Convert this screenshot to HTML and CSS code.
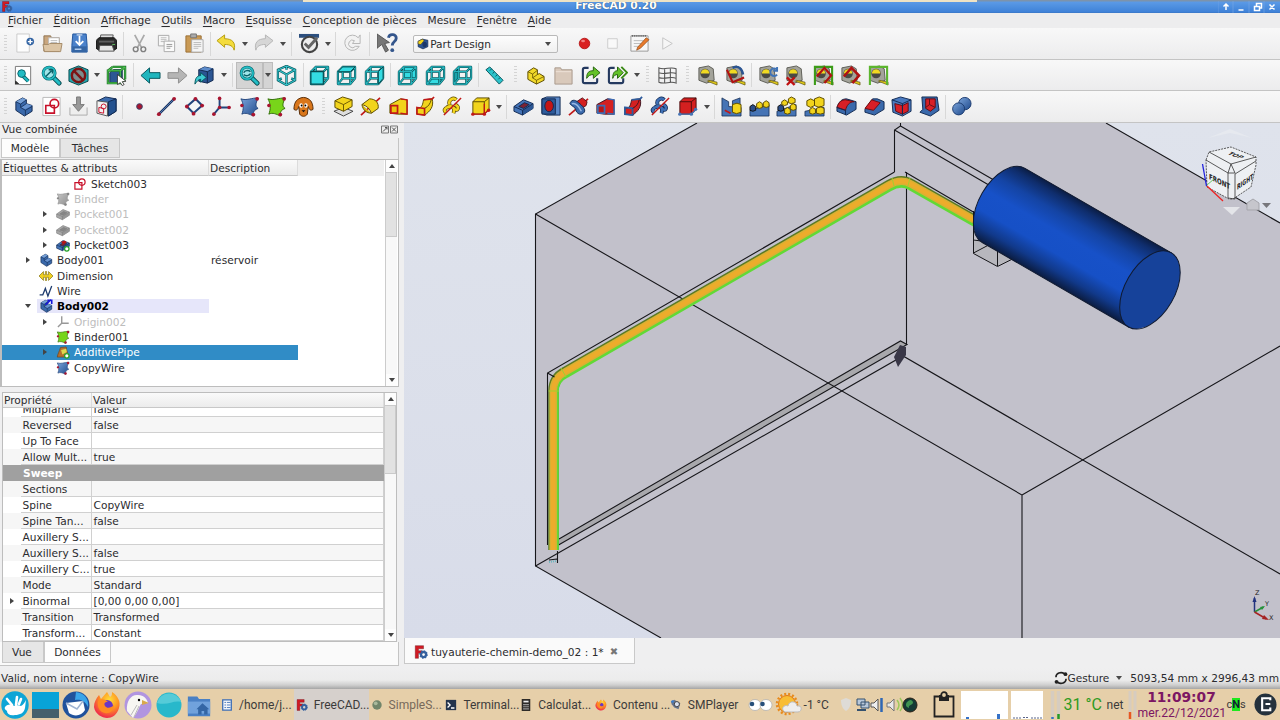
FILE: index.html
```
<!DOCTYPE html>
<html lang="fr">
<head>
  <meta charset="UTF-8">
  <title>FreeCAD 0.20</title>
  <link rel="stylesheet" href="styles.css">
</head>
<body>

  <!-- icon library -->
  <svg class="defs" aria-hidden="true">
    <defs>
      <linearGradient id="blueGrad" x1="0" y1="0" x2="1" y2="1"><stop offset="0" stop-color="#7aa3da"/><stop offset="1" stop-color="#1f4a8c"/></linearGradient>
      <radialGradient id="fire" cx=".6" cy=".3" r=".8"><stop offset="0" stop-color="#ffde3a"/><stop offset=".45" stop-color="#ff9420"/><stop offset=".85" stop-color="#f0304a"/></radialGradient>
    </defs>

    <!-- file -->
    <symbol id="new" viewBox="0 0 22 22"><path d="M3 1h13v19H3z" fill="#fdfdfd" stroke="#c9c9c9"/><circle cx="17" cy="9" r="4" fill="#3465a4"/><path d="M17 6.500v5M14.500 9h5" stroke="#fff" stroke-width="1.500"/></symbol>
    <symbol id="open" viewBox="0 0 22 22"><path d="M2 3h7l1 2h8v14H2z" fill="#c9a67e" stroke="#8f7352"/><path d="M7 5h11v9H7z" fill="#fff" stroke="#bbb"/><path d="M9 8h7M9 10h7" stroke="#bbb"/><path d="M1 12h6l1-1h13l-1.500 8.500h-17z" fill="#dcc5a5" stroke="#a58a68"/></symbol>
    <symbol id="save" viewBox="0 0 22 22"><path d="M4 1h14l1 12v7H3v-7z" fill="#4b82cb" stroke="#20549c"/><path d="M3.500 14h15v6h-15z" fill="#3465a4"/><path d="M11 3v9M7 8.500l4 4 4-4" fill="none" stroke="#fff" stroke-width="1.800"/><path d="M6 17h7" stroke="#bcd3f2" stroke-width="1.500"/><path d="M8 2h6" stroke="#fff"/></symbol>
    <symbol id="print" viewBox="0 0 22 22"><path d="M5 2h13l-1 7H4z" fill="#ddd" stroke="#555"/><path d="M0 8l3-3h16l3 3v8l-3 2H3l-3-2z" fill="#2b2b2b" stroke="#111"/><path d="M3 8h16v2H3z" fill="#5d5d5d"/><path d="M17 12h3" stroke="#5fc05f"/><path d="M4 13h13l2 6H3z" fill="#e6e6e6" stroke="#555"/></symbol>
    <symbol id="cut" viewBox="0 0 22 22"><path d="M6 2l7 13M16 2L9 15" stroke="#a9a9a9" stroke-width="1.800"/><circle cx="7" cy="17" r="2.500" fill="none" stroke="#808080" stroke-width="1.500"/><circle cx="15" cy="17" r="2.500" fill="none" stroke="#808080" stroke-width="1.500"/></symbol>
    <symbol id="copy" viewBox="0 0 22 22"><path d="M2.500 2.500h11v11h-11z" fill="#f7f7f7" stroke="#aaa"/><path d="M5 5h6M5 7h6M5 9h4" stroke="#bbb"/><path d="M8.500 8.500h11v11h-11z" fill="#fafafa" stroke="#aaa"/><path d="M11 12h6M11 14h6M11 16h4" stroke="#999"/></symbol>
    <symbol id="paste" viewBox="0 0 22 22"><path d="M2 3h16v17H2z" fill="#c99a55" stroke="#9a6f34"/><path d="M7 1h6v4H7z" fill="#aaa" stroke="#777"/><path d="M8 7h12v13H8z" fill="#f5f5f5" stroke="#aaa"/><path d="M10 10h8M10 12h8M10 14h8M10 16h5" stroke="#bbb"/></symbol>
    <symbol id="undo" viewBox="0 0 22 22"><path d="M1 8l8-6v4c8 0 12 4 10 12-1-4-4-6-10-6v3z" fill="#f4dc3c" stroke="#b69c10"/></symbol>
    <symbol id="redo" viewBox="0 0 22 22"><path d="M21 8l-8-6v4C5 6 1 10 3 18c1-4 4-6 10-6v3z" fill="#d6d6d6" stroke="#b5b5b5"/></symbol>
    <symbol id="check" viewBox="0 0 22 22"><path d="M0 1h21v4H0z" fill="#2c4f7e"/><circle cx="11" cy="12" r="8" fill="#eee" stroke="#444" stroke-width="2.200"/><path d="M6 11l4 4 9-10" fill="none" stroke="#666" stroke-width="3"/></symbol>
    <symbol id="refresh" viewBox="0 0 22 22"><path d="M17 5A8 8 0 1 0 18 14h-4a4 4 0 1 1-1-6l-2 3h8V2z" fill="#f2f2f2" stroke="#b5b5b5"/></symbol>
    <symbol id="whats" viewBox="0 0 22 22"><path d="M0 1l13 9-5 1 4 7-3 2-4-8-5 4z" fill="#777" stroke="#555"/><path d="M12 5c1-5 9-4 8 1 0 3-4 3-4 7" fill="none" stroke="#34568c" stroke-width="3"/><circle cx="16" cy="18" r="2" fill="#34568c"/></symbol>
    <symbol id="record" viewBox="0 0 22 22"><circle cx="11" cy="11" r="5.500" fill="#d92020" stroke="#b81c1c"/><ellipse cx="9.500" cy="8.500" rx="2" ry="1.300" fill="#f08080"/></symbol>
    <symbol id="stop" viewBox="0 0 22 22"><path d="M6 6h10v10H6z" fill="#f9f9f9" stroke="#ccc"/></symbol>
    <symbol id="macro" viewBox="0 0 22 22"><path d="M2 3h18v16H2z" fill="#f7f7f7" stroke="#999"/><path d="M3 3h16" stroke="#555" stroke-dasharray="1 1" stroke-width="2"/><path d="M5 8h10M5 11h8M5 14h6" stroke="#bbb"/><path d="M9 15l9-10 3 2-9 9-4 2z" fill="#e87a2c" stroke="#8d4a18" stroke-width=".7"/></symbol>
    <symbol id="play" viewBox="0 0 22 22"><path d="M6 5l10 6-10 6z" fill="#f6f6f6" stroke="#c4c4c4"/></symbol>

    <!-- view -->
    <symbol id="lens" viewBox="0 0 22 22"><path d="M13 13l6 6" stroke="#06454b" stroke-width="5" stroke-linecap="round"/><path d="M13 13l6 6" stroke="#22bcc4" stroke-width="3" stroke-linecap="round"/><circle cx="8.500" cy="8.500" r="6.300" fill="#9fe6ea" stroke="#06646b" stroke-width="3"/><circle cx="8.500" cy="8.500" r="6.300" fill="none" stroke="#22bcc4" stroke-width="1.800"/></symbol>
    <symbol id="fitall" viewBox="0 0 22 22"><path d="M2.500 1.500h16v19H7l-4.500-4z" fill="#fff" stroke="#777"/><path d="M2 16l5 4.500H2z" fill="#333"/><path d="M10 11l6 6" stroke="#06646b" stroke-width="4"/><path d="M10 11l6 6" stroke="#22bcc4" stroke-width="2"/><circle cx="9" cy="9" r="4" fill="#22bcc4" stroke="#06646b"/></symbol>
    <symbol id="fitsel" viewBox="0 0 22 22"><use href="#lens"/><path d="M5 12l6-6M8 5h4v4" fill="none" stroke="#0a6168" stroke-width="1.500"/></symbol>
    <symbol id="draw" viewBox="0 0 22 22"><path d="M1 5l10-4 10 4v12l-10 4-10-4z" fill="#22aab2" stroke="#06454b"/><circle cx="11" cy="11" r="7" fill="#7d8d8d" stroke="#7c1414" stroke-width="2.600"/><path d="M6 6l10 10" stroke="#7c1414" stroke-width="2.600"/></symbol>
    <symbol id="bbox" viewBox="0 0 22 22"><path d="M4 8l4-3h9v10l-3 4H4z" fill="#2d5794" stroke="#132a50"/><path d="M2 6h13v13H2zM7 2h13v13M7 2L2 6M15 6l5-4M15 19l5-4" fill="none" stroke="#176a24" stroke-width="2.400"/><path d="M2 6h13v13H2zM7 2h13v13M7 2L2 6M15 6l5-4M15 19l5-4" fill="none" stroke="#4fc24f" stroke-width="1.100"/><path d="M12 10l9 7-4 .5 2 3-2 1-2-3-3 2z" fill="#fff" stroke="#222" stroke-width=".8"/></symbol>
    <symbol id="back" viewBox="0 0 22 22"><path d="M1 11l9-8v5h11v6H10v5z" fill="#1fb5bd" stroke="#06555c"/></symbol>
    <symbol id="fwd" viewBox="0 0 22 22"><path d="M21 11l-9-8v5H1v6h11v5z" fill="#b5b5b5" stroke="#8e8e8e"/></symbol>
    <symbol id="linknav" viewBox="0 0 22 22"><path d="M5 5l6-3 9 2v12l-6 3-9-2z" fill="#2b5593" stroke="#132a50"/><path d="M5 5l6-3 9 2-6 3z" fill="#5c8bca"/><path d="M5 5l9 2v12M14 7l6-3" fill="none" stroke="#132a50"/><path d="M1 20c0-7 3-9 6-9V8l6 5-6 5v-3c-2 0-4 2-6 5z" fill="#3ccbd2" stroke="#06555c"/></symbol>
    <symbol id="zoomv" viewBox="0 0 22 22"><use href="#lens"/><path d="M5 8a4 3 0 0 1 7-1M12 9a4 3 0 0 1-7 1" stroke="#0a6168" stroke-width="1.500" fill="none"/></symbol>
    <symbol id="iso" viewBox="0 0 22 22"><path d="M11 1l9 4v11l-9 5-9-5V5zM2 5l9 5 9-5M11 10v11M11 1v4M2 16l4-2M20 16l-4-2" fill="none" stroke="#06545b" stroke-width="2.400"/><path d="M11 1l9 4v11l-9 5-9-5V5zM2 5l9 5 9-5M11 10v11M11 1v4M2 16l4-2M20 16l-4-2" fill="none" stroke="#35c3ca" stroke-width="1.100"/></symbol>
    <symbol id="wire" viewBox="0 0 22 22"><path d="M2 7h13v13H2zM7 2h13v12H7zM2 7l5-5M15 7l5-5M15 20l5-6M2 20l5-6" fill="none" stroke="#05474d" stroke-width="2.300" stroke-linejoin="round"/><path d="M2 7h13v13H2zM7 2h13v12H7zM2 7l5-5M15 7l5-5M15 20l5-6M2 20l5-6" fill="none" stroke="#27b6be" stroke-width="1.200"/></symbol>
    <symbol id="vfront" viewBox="0 0 22 22"><use href="#wire"/><path d="M2 7h13v13H2z" fill="#34dbe2" stroke="#05474d" stroke-width="1.200"/></symbol>
    <symbol id="vtop" viewBox="0 0 22 22"><use href="#wire"/><path d="M2 7l5-5h13l-5 5z" fill="#34dbe2" stroke="#05474d"/></symbol>
    <symbol id="vright" viewBox="0 0 22 22"><use href="#wire"/><path d="M15 7l5-5v12l-5 6z" fill="#34dbe2" stroke="#05474d"/></symbol>
    <symbol id="vrear" viewBox="0 0 22 22"><path d="M7 2h13v12H7z" fill="#34dbe2"/><use href="#wire"/></symbol>
    <symbol id="vbottom" viewBox="0 0 22 22"><path d="M2 20l5-6h13l-5 6z" fill="#34dbe2"/><use href="#wire"/></symbol>
    <symbol id="vleft" viewBox="0 0 22 22"><path d="M2 7l5-5v12l-5 6z" fill="#1aa4ab"/><use href="#wire"/></symbol>
    <symbol id="ruler" viewBox="0 0 22 22"><path d="M2 5l4-3 14 14-4 4z" fill="#2bc3cb" stroke="#06555c"/><path d="M8 4l-2 2M11 7l-2 2M14 10l-2 2M17 13l-2 2" stroke="#06555c"/></symbol>
    <symbol id="part" viewBox="0 0 22 22"><path d="M3 7l6-4 4 2v5l2-1 5 3v4l-8 4-9-5z" fill="#f2d92a" stroke="#5b4b00"/><path d="M3 7l5 2.500 5-4M8 9.500v4L12 16l8-4M12 16v4M8 13.500l5-3.500" fill="none" stroke="#5b4b00" stroke-width=".8"/></symbol>
    <symbol id="folder" viewBox="0 0 22 22"><path d="M2 3h6l1 2h11v15H2z" fill="#d9c9bb" stroke="#a8998c"/><path d="M3 7h16" stroke="#efe3d8"/></symbol>
    <symbol id="link" viewBox="0 0 22 22"><path d="M9 3H5a2 2 0 0 0-2 2v12a2 2 0 0 0 2 2h11a2 2 0 0 0 2-2v-3" fill="none" stroke="#24395f" stroke-width="2.200"/><path d="M7 14c0-6 2-8 7-8V2l7 6-7 6v-4c-3 0-5 1-7 4z" fill="#63c228" stroke="#23610a"/></symbol>
    <symbol id="links" viewBox="0 0 22 22"><path d="M8 3H4a2 2 0 0 0-2 2v12a2 2 0 0 0 2 2h11a2 2 0 0 0 2-2v-3" fill="none" stroke="#24395f" stroke-width="2.200"/><path d="M15 2l6 6-6 6" fill="none" stroke="#3a8a14" stroke-width="2"/><path d="M6 14c0-6 2-8 5-8V2l6 6-6 6v-4c-2 0-4 1-5 4z" fill="#63c228" stroke="#23610a"/></symbol>
    <symbol id="grid" viewBox="0 0 22 22"><path d="M2 3c6 3 12-2 18 1v15c-6-3-12 2-18-1zM8 3.500v15M14 3v15M2 8c6 3 12-2 18 1M2 13c6 3 12-2 18 1" fill="none" stroke="#555" stroke-width="1.100"/></symbol>
    <symbol id="tape" viewBox="0 0 22 22"><path d="M2 3l10-2 5 3 1 12-8 3-8-3z" fill="#a3a39a" stroke="#5d5d56"/><circle cx="8.500" cy="9" r="5" fill="#4a4a44"/><path d="M4 9a4.500 4.500 0 0 1 9 0z" fill="#f1da22"/><path d="M12 16l9 2v3l-10-4z" fill="#e3cc18" stroke="#55490a" stroke-width=".7"/></symbol>
    <symbol id="tang" viewBox="0 0 22 22"><use href="#tape"/><path d="M8 3c6-3 10 1 11 7" fill="none" stroke="#2b5593" stroke-width="2.400"/><path d="M2 5l6 13 12-5" fill="none" stroke="#b01212" stroke-width="2.200"/></symbol>
    <symbol id="trefresh" viewBox="0 0 22 22"><use href="#tape"/><path d="M20 2v4h-4M20 5a4 4 0 1 0 0 5" fill="none" stroke="#3f73b7" stroke-width="2"/></symbol>
    <symbol id="tclear" viewBox="0 0 22 22"><use href="#tape"/><path d="M2 13l8 8M10 13l-8 8" stroke="#c01010" stroke-width="2.400"/></symbol>
    <symbol id="tall" viewBox="0 0 22 22"><use href="#tape"/><path d="M2 21V2h18v19" fill="none" stroke="#3c9c18" stroke-width="2.200"/><path d="M4 12l8-9 7 8-7 8" fill="none" stroke="#b01212" stroke-width="2.300"/></symbol>
    <symbol id="t3d" viewBox="0 0 22 22"><use href="#tape"/><path d="M4 12L12 3l8 8-7 8" fill="none" stroke="#b01212" stroke-width="2.600"/></symbol>
    <symbol id="tdelta" viewBox="0 0 22 22"><use href="#tape"/><path d="M2 21V2h18v19" fill="none" stroke="#5cb52e" stroke-width="2.200"/></symbol>

    <!-- part design -->
    <symbol id="body" viewBox="0 0 22 22"><path d="M3 6l7-4 4 2v4l6 2v6l-8 5-9-6z" fill="#3a69ab" stroke="#122a52"/><path d="M3 6l5 2 6-4-4-2z" fill="#759fd6"/><path d="M8 12l6-4 6 2-7 4z" fill="#6692cf"/><path d="M3 6l5 2.500V12l5 3v5M8 8.500L14 4M8 12l6-4M13 15l7-4" fill="none" stroke="#122a52" stroke-width=".8"/></symbol>
    <symbol id="bodyact" viewBox="0 0 22 22"><use href="#body"/><path d="M10 9L19 1M13 2h7v6" fill="none" stroke="#1414d8" stroke-width="2.500"/></symbol>
    <symbol id="sk" viewBox="0 0 22 22"><path d="M3 9h11v10H3z" fill="none" stroke="#c8102a" stroke-width="1.900"/><circle cx="14" cy="8" r="5" fill="none" stroke="#c8102a" stroke-width="1.900"/></symbol>
    <symbol id="sketch" viewBox="0 0 22 22"><path d="M2 1.500h18v19H2z" fill="#fff" stroke="#b9b9b9"/><path d="M5 10h9v8H5z" fill="none" stroke="#c8102a" stroke-width="1.700"/><circle cx="14" cy="8" r="4.500" fill="none" stroke="#c8102a" stroke-width="1.700"/></symbol>
    <symbol id="leave" viewBox="0 0 22 22"><path d="M2 12v8h18v-8" fill="#eee" stroke="#aaa"/><path d="M9 1h4v8h4l-6 7-6-7h4z" fill="#999" stroke="#777"/></symbol>
    <symbol id="mapsk" viewBox="0 0 22 22"><path d="M2 5l8-4 11 2v13l-8 5z" fill="#3d6cae" stroke="#122a52"/><path d="M13 6l8-3v13l-8 5z" fill="#25528f" stroke="#122a52"/><path d="M1 5l11 1.500V21L1 18z" fill="#f2f2f2" stroke="#555"/><path d="M3 12l5 1v5l-5-1z" fill="none" stroke="#c8102a"/><circle cx="8" cy="11" r="2.600" fill="none" stroke="#c8102a"/></symbol>
    <symbol id="point" viewBox="0 0 22 22"><circle cx="11" cy="11" r="3" fill="#a81530" stroke="#34466d"/></symbol>
    <symbol id="line" viewBox="0 0 22 22"><path d="M3 19L19 3" stroke="#1d3560" stroke-width="2.600"/><path d="M3 19L19 3" stroke="#5580bb" stroke-width="1"/><circle cx="3" cy="19" r="2" fill="#a81530"/><circle cx="19" cy="3" r="2" fill="#a81530"/></symbol>
    <symbol id="plane" viewBox="0 0 22 22"><path d="M12 3l7 7-9 8-7-7z" fill="#f6f6f6" stroke="#23457c" stroke-width="2.200"/><circle cx="12" cy="3" r="2" fill="#a81530"/><circle cx="19" cy="10" r="2" fill="#a81530"/><circle cx="10" cy="18.500" r="2" fill="#a81530"/><circle cx="3" cy="11" r="2" fill="#a81530"/></symbol>
    <symbol id="lcs" viewBox="0 0 22 22"><path d="M9 12V2M9 12h10M9 12l-6 7" stroke="#23457c" stroke-width="2"/><circle cx="9" cy="2.500" r="1.900" fill="#a81530"/><circle cx="9" cy="12" r="1.900" fill="#a81530"/><circle cx="19" cy="12" r="1.900" fill="#a81530"/><circle cx="3" cy="19" r="1.900" fill="#a81530"/></symbol>
    <symbol id="binderb" viewBox="0 0 22 22"><path d="M2 3c6 2 11-1 18-1-3 7-3 9 0 11-5 2-5 4-5 8-4-2-8-4-12-2 2-5 2-11-1-16z" fill="url(#blueGrad)" stroke="#23457c"/><circle cx="19" cy="3" r="2" fill="#a81530"/><circle cx="3" cy="10" r="1.800" fill="#a81530"/><circle cx="15" cy="19.500" r="2" fill="#a81530"/></symbol>
    <symbol id="binderg" viewBox="0 0 22 22"><path d="M2 3c6 2 11-1 18-1-3 7-3 9 0 11-5 2-5 4-5 8-4-2-8-4-12-2 2-5 2-11-1-16z" fill="#78d51a" stroke="#2e6b06"/><circle cx="19" cy="3" r="2" fill="#a81530"/><circle cx="3" cy="10" r="1.800" fill="#a81530"/><circle cx="15" cy="19.500" r="2" fill="#a81530"/></symbol>
    <symbol id="dog" viewBox="0 0 22 22"><path d="M6 3c3-2 7-2 10 0 4 2 5 7 5 11-3 2-4 0-5-3l-1 8c-2 3-6 3-8 0l-1-8c-1 3-2 5-5 3 0-4 1-9 5-11z" fill="#d9761b" stroke="#542a06"/><ellipse cx="8.500" cy="10" rx="1.800" ry="2.400" fill="#fff"/><ellipse cx="13.500" cy="10" rx="1.800" ry="2.400" fill="#fff"/><path d="M9 15h4l-2 2z" fill="#111"/><circle cx="9" cy="10" r="1"/><circle cx="13" cy="10" r="1"/></symbol>
    <symbol id="pad" viewBox="0 0 22 22"><path d="M1 16l10-4 10 4-10 5z" fill="#ddd" stroke="#444"/><path d="M2 5l8-4 10 3v7l-9 5-9-4z" fill="#f2d41c" stroke="#5b4b00"/><path d="M2 5l9 4 9-5M11 9v7" fill="none" stroke="#5b4b00" stroke-width=".9"/></symbol>
    <symbol id="rev" viewBox="0 0 22 22"><path d="M1 20L21 2" stroke="#c01818" stroke-width="1.800"/><path d="M2 9l8-6c6 0 10 4 9 10l-7 5c-2-5-5-8-10-9z" fill="#f2d41c" stroke="#5b4b00"/><path d="M2 9c1 6 5 9 10 9" fill="#d8b80c" stroke="#5b4b00"/></symbol>
    <symbol id="loft" viewBox="0 0 22 22"><path d="M2 9l11-6 7 1v15H10l-8-1z" fill="#f2d41c" stroke="#5b4b00"/><path d="M13 3l7 1v15l-7-1" fill="none" stroke="#c01818" stroke-width="1.500"/><path d="M3 10h7v8H3z" fill="#ecc50c" stroke="#c01818" stroke-width="1.800"/></symbol>
    <symbol id="pipe" viewBox="0 0 22 22"><path d="M2 13c6 0 6-5 7-9l9-1c2 8-2 13-8 17l-8-1z" fill="#f2d41c" stroke="#5b4b00"/><path d="M9 4l9-1 2-2M2 12l8 1v7l-8-1z" fill="none" stroke="#c01818" stroke-width="1.700"/><path d="M10 13c4-2 6-5 7-9" fill="none" stroke="#5b4b00"/></symbol>
    <symbol id="helix" viewBox="0 0 22 22"><path d="M4 17c-5-4 6-8 9-4s6-1 1-4M8 9c-2-5 4-8 7-5M5 12c5-3 9 0 7 6" fill="none" stroke="#5b4b00" stroke-width="4"/><path d="M4 17c-5-4 6-8 9-4s6-1 1-4M8 9c-2-5 4-8 7-5M5 12c5-3 9 0 7 6" fill="none" stroke="#f2d41c" stroke-width="2.600"/><path d="M2 20L20 2" stroke="#c01818" stroke-width="1.500"/></symbol>
    <symbol id="prim" viewBox="0 0 22 22"><path d="M3 6l4-4h13v12l-5 5H3z" fill="#f2d41c" stroke="#5b4b00"/><path d="M3 6h12v13M15 6l5-4" fill="none" stroke="#5b4b00"/><path d="M3 19h12l4-4M15 19V8" fill="none" stroke="#c01818" stroke-width="1.400"/><circle cx="3" cy="19" r="1.800" fill="#c01818"/><circle cx="15" cy="19" r="1.800" fill="#c01818"/><circle cx="19.500" cy="15" r="1.800" fill="#c01818"/></symbol>
    <symbol id="pocket" viewBox="0 0 22 22"><path d="M1 11l10-7 10 4v5l-11 7-9-4z" fill="#4474b8" stroke="#122a52"/><path d="M10 15l11-7v5l-11 7z" fill="#2c5794"/><path d="M1 11l9 4 11-7M10 15v5" fill="none" stroke="#122a52"/><path d="M6 11l6-4 5 2-6 4z" fill="#7a2334" stroke="#122a52"/></symbol>
    <symbol id="hole" viewBox="0 0 22 22"><path d="M1 3l5-2h14v19H6l-5-2z" fill="#5a88c8" stroke="#122a52"/><path d="M1 3h14v16H1z" fill="#2f5c9c" stroke="#122a52"/><ellipse cx="8.500" cy="10.500" rx="4.500" ry="6" fill="#c41616" stroke="#122a52"/></symbol>
    <symbol id="groove" viewBox="0 0 22 22"><path d="M1 20L21 3" stroke="#c01818" stroke-width="1.800"/><path d="M9 6l6-4 5 4-1 4-6 4z" fill="#d42020" stroke="#5c1018"/><path d="M2 8c1-4 5-5 9-1 4 3 8 7 6 10-3 4-8 2-9-3-1-3-4-3-6-6z" fill="#3a69ab" stroke="#122a52"/><path d="M4 8c4-1 8 4 10 8" fill="none" stroke="#9ab9e4" stroke-width="1.600"/></symbol>
    <symbol id="sloft" viewBox="0 0 22 22"><path d="M2 9l11-6 7 1v15H10l-8-1z" fill="#d42020" stroke="#3c1420"/><path d="M13 3l7 1v15l-7-1" fill="none" stroke="#3d6cb3" stroke-width="1.500"/><path d="M3 10h7v8H3z" fill="#b81616" stroke="#3d6cb3" stroke-width="1.800"/></symbol>
    <symbol id="spipe" viewBox="0 0 22 22"><path d="M2 13c6 0 6-5 7-9l9-1c2 8-2 13-8 17l-8-1z" fill="#d42020" stroke="#3c1420"/><path d="M9 4l9-1 2-2M2 12l8 1v7l-8-1z" fill="none" stroke="#2f5c9c" stroke-width="1.900"/><path d="M10 13c4-2 6-5 7-9" fill="none" stroke="#3c1420"/></symbol>
    <symbol id="shelix" viewBox="0 0 22 22"><path d="M4 17c-5-4 6-8 9-4s6-1 1-4M8 9c-2-5 4-8 7-5M5 12c5-3 9 0 7 6" fill="none" stroke="#122a52" stroke-width="4"/><path d="M4 17c-5-4 6-8 9-4s6-1 1-4M8 9c-2-5 4-8 7-5M5 12c5-3 9 0 7 6" fill="none" stroke="#3f70b5" stroke-width="2.500"/><path d="M2 20L20 2" stroke="#c01818" stroke-width="1.500"/></symbol>
    <symbol id="sprim" viewBox="0 0 22 22"><path d="M3 6l4-4h13v12l-5 5H3z" fill="#d42020" stroke="#4a0d0d"/><path d="M3 6h12v13M15 6l5-4" fill="none" stroke="#4a0d0d"/><path d="M2 19h13l5-5" fill="none" stroke="#4674b5" stroke-width="1.500"/><circle cx="3" cy="19" r="1.800" fill="#4674b5"/><circle cx="15" cy="19" r="1.800" fill="#4674b5"/><circle cx="19.500" cy="14" r="1.800" fill="#4674b5"/></symbol>
    <symbol id="mirror" viewBox="0 0 22 22"><path d="M1 2l7 4v5l13 1v9H1z" fill="#4674b5" stroke="#122a52" stroke-width=".8"/><path d="M12 5l8-3v8h-8z" fill="#4674b5" stroke="#122a52" stroke-width=".8"/><path d="M12 9q5-3 9 0v8q-5 3-9 0z" fill="#f2d41c" stroke="#5b4b00"/><path d="M4 15l6 3" stroke="#c01818" stroke-width="1.800"/></symbol>
    <symbol id="linear" viewBox="0 0 22 22"><path d="M1 15l20-6v12H1z" fill="#4674b5" stroke="#122a52" stroke-width=".8"/><path d="M1 11l3-2 3 2v4l-3 1-3-1z" fill="#2a4d88" stroke="#111"/><path d="M8 8l3-2 3 2v4l-3 1-3-1zM15 7l3-2 3 2v4l-3 1-3-1z" fill="#f2d41c" stroke="#5b4b00"/></symbol>
    <symbol id="polar" viewBox="0 0 22 22"><path d="M1 16l20-7v12H1z" fill="#4674b5" stroke="#122a52" stroke-width=".8"/><path d="M2 11l3-2 3 2v4l-3 1-3-1z" fill="#2a4d88" stroke="#111"/><path d="M6 6l3-2 3 2v3l-3 1-3-1zM13 3l3-2 4 2v4l-4 1-3-1zM15 10l3-2 3 2v4l-3 1-3-1zM9 14l3-2 3 2v4l-3 1-3-1z" fill="#f2d41c" stroke="#5b4b00"/></symbol>
    <symbol id="multi" viewBox="0 0 22 22"><path d="M1 16l20-4v9H1z" fill="#4674b5" stroke="#122a52" stroke-width=".8"/><path d="M3 5l4-2 4 2v5l-4 2-4-2zM11 3l5-2 5 2v7l-5 2-5-2zM13 13l4-2 4 2v5l-4 1-4-1zM6 14l3-2 3 2v4l-3 1-3-1z" fill="#f2d41c" stroke="#5b4b00"/></symbol>
    <symbol id="fillet" viewBox="0 0 22 22"><path d="M1 12c2-6 5-9 10-9l10 3v8l-10 6-10-4z" fill="#3a69ab" stroke="#122a52"/><path d="M1 12c2-6 5-8 9-8l9 2c-5 0-8 4-9 9z" fill="#d81f26" stroke="#6d0d10"/><path d="M1 12l9 3v5" fill="none" stroke="#122a52"/></symbol>
    <symbol id="chamfer" viewBox="0 0 22 22"><path d="M1 14l8-11h5l7 3v8l-10 6-10-3z" fill="#3a69ab" stroke="#122a52"/><path d="M1 13l7-9 9 3-7 8z" fill="#d81f26" stroke="#6d0d10"/></symbol>
    <symbol id="draft" viewBox="0 0 22 22"><path d="M1 4l9-3 11 3v12l-9 5-10-4z" fill="#4a7ac0" stroke="#122a52"/><path d="M4 8l8 2v9l-7-3zM12 10l6-3v9l-6 3z" fill="#d81f26" stroke="#5c1018"/><path d="M1 4l11 4 9-4M12 8v12" fill="none" stroke="#122a52"/></symbol>
    <symbol id="thick" viewBox="0 0 22 22"><path d="M3 1h16l2 14-9 6-11-4 3-3z" fill="#3a69ab" stroke="#122a52"/><path d="M7 3h10v9l-5 4-5-3z" fill="#d81f26" stroke="#5c1018"/><path d="M7 12l4-3 6 3M11 9V3" fill="none" stroke="#5c1018"/></symbol>
    <symbol id="bool" viewBox="0 0 22 22"><circle cx="14.500" cy="8" r="6.500" fill="url(#blueGrad)" stroke="#1c3c70"/><circle cx="8" cy="13.500" r="6.300" fill="url(#blueGrad)" stroke="#1c3c70"/></symbol>
    <symbol id="dim" viewBox="0 0 22 22"><path d="M0 11l7-7v5h3V4h2v5h3V4l7 7-7 7v-5h-3v5h-2v-5H7v5z" fill="#f0d020" stroke="#7c6a08"/></symbol>
    <symbol id="wirei" viewBox="0 0 22 22"><path d="M1 17h5l4-10 4 12 6-16" fill="none" stroke="#1f3c6e" stroke-width="2"/></symbol>
    <symbol id="axes" viewBox="0 0 22 22"><path d="M9 2v11h11M9 13l-6 6" fill="none" stroke="#555" stroke-width="2.200"/></symbol>
    <symbol id="pocketok" viewBox="0 0 22 22"><use href="#pocket"/><path d="M8 6l6-2 3 3-6 3z" fill="#b81414"/><circle cx="17" cy="17" r="3.500" fill="#fff" stroke="#26a32a" stroke-width="2"/></symbol>
    <symbol id="pipeok" viewBox="0 0 22 22"><path d="M2 19c1-6 3-8 5-15l9-1c1 7 3 10 3 16z" fill="#b3702e" stroke="#6c3d17"/><path d="M8 8l8-2 1 5-7 4z" fill="#dcd94e"/><circle cx="17" cy="17" r="3.500" fill="#fff" stroke="#26a32a" stroke-width="2"/></symbol>
    <symbol id="fc" viewBox="0 0 22 22"><path d="M2 1h13v5H7v3h6v4H7v8H2z" fill="#d11a24" stroke="#5d0a0e" stroke-width=".6"/><circle cx="15" cy="15" r="4" fill="none" stroke="#35609e" stroke-width="3.600"/><circle cx="15" cy="15" r="5.800" fill="none" stroke="#35609e" stroke-width="1.800" stroke-dasharray="2.200 2.300"/></symbol>
    <symbol id="pd" viewBox="0 0 22 22"><path d="M2 6l8-4 10 2v12l-9 4-9-4z" fill="#2c5593" stroke="#101f3f"/><path d="M2 6l8-4 3 3-6 7-5-1z" fill="#f2d41c" stroke="#333"/><ellipse cx="14" cy="12" rx="4" ry="5" fill="#1b3768"/></symbol>
    <symbol id="nav" viewBox="0 0 22 22"><path d="M3 10c0-7 8-9 13-6M19 12c0 7-8 9-13 6" fill="none" stroke="#222" stroke-width="2.500"/><circle cx="18" cy="5" r="3" fill="#222"/><circle cx="4" cy="17" r="3" fill="#222"/></symbol>

    <!-- desktop panel -->
    <symbol id="mouse" viewBox="0 0 28 28"><circle cx="14" cy="14" r="13.700" fill="#0ea5d6"/><path d="M4 16c3-3 6-3 9-1 2-1 5-1 7 0 2-1 4-4 5-6l-1 8c-1 5-5 7-10 7-5 1-8-1-8-4-1-1-3-2-2-4z" fill="#fff"/><path d="M6 8l5 6M16 6l-1 8M20 8l-2 5" stroke="#fff" stroke-width="2.600" stroke-linecap="round"/></symbol>
    <symbol id="tbird" viewBox="0 0 28 28"><circle cx="14" cy="14" r="13.500" fill="#20529c"/><path d="M14 1c9 1 13 8 12 15-3-6-7-8-13-7z" fill="#39a5ea"/><path d="M4 12l17 -2 2 9c-3 6-11 7-16 3z" fill="#fff"/><path d="M4 12l11 6 6-8" fill="none" stroke="#9fb3d1" stroke-width="1.500"/></symbol>
    <symbol id="ff" viewBox="0 0 28 28"><path d="M14 1l3 5c2-1 2-3 2-5 6 4 9 10 7 16-2 7-7 10-12 10S2 23 1 16c0-5 2-8 5-12l2 4z" fill="url(#fire)"/><circle cx="14" cy="15" r="6" fill="#6a36c4"/><path d="M5 10c4-3 7-2 10 1-4 0-4 2-3 4 2 3 6 2 9-1 0 6-5 9-9 8-5-1-8-5-7-12z" fill="#ff8b22"/></symbol>
    <symbol id="bird" viewBox="0 0 28 28"><circle cx="14" cy="14" r="13.500" fill="#b195e0"/><path d="M3 20C2 9 8 3 14 4c6 0 9 4 10 8l-7 1c-2 3-3 8-8 14z" fill="#f7f6f2"/><path d="M18 9l7 3-7 2z" fill="#d8a84c"/><circle cx="15" cy="9" r="1.200"/><path d="M7 24l6-10M10 26l5-11" stroke="#bbb"/></symbol>
    <symbol id="orb" viewBox="0 0 28 28"><circle cx="14" cy="14" r="12.500" fill="#28b8cb"/><path d="M2 12a12.500 12.500 0 0 1 24-1c-8-2-13 4-24 1z" fill="#55cbd8"/></symbol>
    <symbol id="home" viewBox="0 0 28 28"><path d="M1 4h11l2 3h13v20H1z" fill="#4a80c4"/><path d="M1 10h26v14H1z" fill="#71a2dc"/><path d="M11 19l7-7 8 7h-2v6h-4v-4h-3v4h-4v-6z" fill="#3466a5"/></symbol>
    <symbol id="files" viewBox="0 0 14 14"><path d="M2 1h10v12H2z" fill="#f5f7fb" stroke="#3b6cb4" stroke-width="1.500"/><path d="M4 4h2M7 4h4M4 7h2M7 7h4M4 10h2M7 10h4" stroke="#3b6cb4"/></symbol>
    <symbol id="ball" viewBox="0 0 14 14"><circle cx="7" cy="7" r="5.500" fill="#71856a"/><circle cx="5.500" cy="5" r="2.200" fill="#a9b99c"/></symbol>
    <symbol id="term" viewBox="0 0 14 14"><path d="M1 1h12v12H1z" fill="#24344c"/><path d="M3 4l3 3-3 3M7 10.500h4" fill="none" stroke="#fff" stroke-width="1.500"/></symbol>
    <symbol id="calc" viewBox="0 0 14 14"><path d="M2 0h10v14H2z" fill="#2e2b28"/><path d="M4 2h6v2H4z" fill="#eee"/><path d="M4 6.500h6M4 9h6M4 11.500h6" stroke="#ddd" stroke-width="1.300" stroke-dasharray="1.400 .9"/></symbol>
    <symbol id="smp" viewBox="0 0 14 14"><path d="M1 3l4-2 7 4-2 7-5-2-3-4z" fill="#66748d"/><circle cx="8" cy="6" r="3" fill="#d9e0ee" stroke="#333"/><circle cx="3" cy="3" r="1.500" fill="#3a7fd0"/></symbol>
  </svg>

  <header class="titlebar">
    <svg class="app-icon"><use href="#fc"/></svg>
    <span class="title">FreeCAD 0.20</span>
    <svg class="winbtns" viewBox="0 0 62 12"><path d="M8 3v6M5.500 5.500L8 3l2.500 2.500M20.500 9h5M36.500 5.500h5v4h-5zM38.500 5V2.500h5V7H42M51.500 3.500l5 5M56.500 3.500l-5 5" fill="none" stroke="#fff" stroke-width="1.500"/><path d="M0 0v12M15 0v12M31 0v12M46 0v12" stroke="#7ba8e6" stroke-width=".6"/></svg>
  </header>

  <nav class="menubar">
    <a><u>F</u>ichier</a><a><u>É</u>dition</a><a><u>A</u>ffichage</a><a><u>O</u>utils</a><a><u>M</u>acro</a><a><u>E</u>squisse</a><a><u>C</u>onception de pièces</a><a>Mesure</a><a><u>F</u>enêtre</a><a><u>A</u>ide</a>
  </nav>

  <div class="toolbar" id="bar-file"></div>
  <div class="toolbar" id="bar-view"></div>
  <div class="toolbar" id="bar-design"></div>

  <main>
    <aside>
      <div class="dock-title"><span>Vue combinée</span>
        <svg viewBox="0 0 17 9"><path d="M.5 1h7v7h-7zM9.500 1h7v7h-7z" fill="#eee" stroke="#777"/><path d="M2 6.500L6 2.500M4 2.500h2v2M11 2.500l4 4M15 2.500l-4 4" stroke="#555" fill="none"/></svg>
      </div>
      <div class="tabs"><span class="tab on model">Modèle</span><span class="tab tasks">Tâches</span></div>

      <div class="tree">
        <div class="tree-list">
          <div class="tree-head"><span>Étiquettes &amp; attributs</span><span>Description</span></div>
          <div id="rows"></div>
        </div>
        <div class="scroll"><i class="up"></i><b class="tree-thumb"></b><i class="down"></i></div>
      </div>

      <div class="props">
        <div class="prop-list">
          <div class="prop-head"><span>Propriété</span><span>Valeur</span></div>
          <div class="prop-view"><div id="props"></div></div>
        </div>
        <div class="scroll"><i class="up"></i><b class="prop-thumb"></b><i class="down"></i></div>
      </div>
      <div class="tabs bottom"><span class="tab view">Vue</span><span class="tab on data">Données</span></div>
    </aside>

    <section class="mdi">
      <svg class="scene" viewBox="404 123 876 515">
        <defs>
          <linearGradient id="sky" x1="0" y1="0" x2="0" y2="1"><stop offset="0" stop-color="#dfe3ec"/><stop offset="1" stop-color="#d8dce9"/></linearGradient>
          <linearGradient id="tank" x1="0" y1="0" x2="0" y2="1">
            <stop offset="0" stop-color="#0b1d44"/><stop offset=".08" stop-color="#0f2d6c"/><stop offset=".25" stop-color="#1444a4"/><stop offset=".45" stop-color="#1751c8"/><stop offset=".68" stop-color="#1650c6"/><stop offset=".86" stop-color="#11398a"/><stop offset="1" stop-color="#0b1c40"/>
          </linearGradient>
        </defs>
        <path d="M404 123h876v515H404z" fill="url(#sky)"/>
        <path d="M697 123h409l174 100v415H661L535.500 566V214z" fill="#c2c1cb"/>

        <!-- tray edges -->
        <path d="M559 539L900.500 341l6.500 3.500L558.500 545z" fill="#a8a8ac"/>
        <g fill="none" stroke="#16161a" stroke-width="1.100">
          <path d="M697 123L535.500 214V566L661 638M1106 123l174 100"/>
          <path d="M535.500 214L1022 495V638M1022 495l258-149"/>
          <path d="M559 539L900.500 341l6.500 3.500L558.500 545M535.500 566L903 356l377 218"/>
          <path d="M906.500 172v173M894.500 172v-42l6-4v-3M900.500 126l95 55M894.500 130l96 56"/>
          <path d="M557.500 551v12M549 560l8-1"/>
        </g>
        <path d="M549 562l8-1" stroke="#6ab8c0" stroke-dasharray="1 1" stroke-width="2"/>
        <path d="M900 345l6 2v8l-8 12-4-10z" fill="#393747"/>

        <!-- swept pipe -->
        <g fill="none">
          <path d="M553.500 550V391Q553.500 378 565 372L889 185Q901 178 911 184L978 222" stroke="#5b7a26" stroke-width="10.500"/>
          <path d="M554.300 550V391Q554.300 379 566 373.500L889 187Q901 180 911 186L978 224" stroke="#62d936" stroke-width="9"/>
          <path d="M553.200 550V391Q553.500 378 565 372L889 185Q901 178 911 184L978 222" stroke="#d8b133" stroke-width="7.500"/>
          <path d="M553.200 550V391Q553.500 378 565 372L889 185Q901 178 911 184L978 222" stroke="#edac2b" stroke-width="4.500"/>
          <path d="M548.500 391h10.500M561 368l5 9M892 178l2 8M910 178l-2 8" stroke="#9fd12f"/>
          <path d="M894.500 172L547.500 373v172M547.500 373l7 4M905 172l70 41" stroke="#16161a" stroke-width="1.100"/>
        </g>

        <!-- tank -->
        <path d="M973.500 240v13.500l24 13 14-7V245z" fill="#b7b7bd" stroke="#16161a"/>
        <path d="M997.500 266v-20M973.500 253l17-9M973.500 211v42" stroke="#16161a"/>
        <g transform="translate(1003.600 205.400) rotate(30)" stroke="#101a30">
          <path d="M0-42.800H169V42.800H0A24.700 42.800 0 0 1 0-42.800z" fill="url(#tank)"/>
          <ellipse cx="169" cy="0" rx="24.700" ry="42.800" fill="#16429a"/>
        </g>

        <!-- navigation cube -->
        <path d="M1208 138l22-9 22 9-8-2-14-3-14 3z" fill="#e6e9ef"/>
        <g stroke="#333" stroke-width=".8" stroke-linejoin="round">
          <path d="M1206 160l3-8 22-5 25 10v8l-5 22-18 12h-4l-22-12z" fill="#eef0f3" stroke-dasharray="2 1"/>
          <path d="M1206 160l22 13v25l7 1V174l21-13M1209 152l22 12 25-7M1231 164l-3 9h7z" fill="none"/>
        </g>
        <text class="cube" transform="matrix(.85 .42 0 1.150 1209 179)">FRONT</text>
        <text class="cube" transform="matrix(.72 -.5 0 1.150 1237 190)">RIGHT</text>
        <text class="cube top" transform="matrix(1 .35 -1 .5 1227 154)">TOP</text>
        <path d="M1202.500 164l4 22" stroke="#2222dd" stroke-width="1.300"/><path d="M1207 186l16 15" stroke="#ee2222" stroke-width="1.300"/><path d="M1207 185l7-6" stroke="#66c466"/>
        <path d="M1223 207h17l-8 8z" fill="#e4e5e9"/><path d="M1247 203l6-4 6 4v7h-12z" fill="#c6c6cc" stroke="#a5a5ab"/><path d="M1262 203h9l-4.500 5z" fill="#77777c"/>

        <!-- axis cross -->
        <path d="M1254.500 612v-14" stroke="#22337f" stroke-width="1.500"/><path d="M1252.500 602l2-6 2 6z" fill="#22337f"/>
        <path d="M1254.500 612l9-5" stroke="#27913b" stroke-width="1.500"/><path d="M1260 607l5-1-3 4z" fill="#27913b"/>
        <path d="M1254.500 612l12 7" stroke="#a52323" stroke-width="1.500"/><path d="M1264 615l5 5-7-1z" fill="#a52323"/>
        <text class="axis" x="1255" y="595">Z</text><text class="axis" x="1265" y="606">Y</text><text class="axis" x="1269" y="620">X</text>
      </svg>
      <div class="doc-tabs"><span class="doc-tab"><svg><use href="#fc"/></svg>tuyauterie-chemin-demo_02 : 1*<b>✖</b></span></div>
    </section>
  </main>

  <footer class="status">
    <span>Valid, nom interne : CopyWire</span>
    <span class="nav-style"><svg><use href="#nav"/></svg>Gesture<i class="caret"></i></span>
    <span class="dims">5093,54 mm x 2996,43 mm</span>
  </footer>

  <div class="taskbar">
    <div class="launchers">
      <svg><use href="#mouse"/></svg>
      <span class="desk"></span>
      <svg><use href="#tbird"/></svg>
      <svg><use href="#ff"/></svg>
      <svg><use href="#bird"/></svg>
      <svg><use href="#orb"/></svg>
      <svg><use href="#home"/></svg>
    </div>
    <div class="tasks-list">
      <span class="task"><svg><use href="#files"/></svg>/home/j...</span>
      <span class="task active"><svg><use href="#fc"/></svg>FreeCAD...</span>
      <span class="task dim"><svg><use href="#ball"/></svg>SimpleS...</span>
      <span class="task"><svg><use href="#term"/></svg>Terminal...</span>
      <span class="task"><svg><use href="#calc"/></svg>Calculat...</span>
      <span class="task"><svg><use href="#ff"/></svg>Contenu ...</span>
      <span class="task"><svg><use href="#smp"/></svg>SMPlayer</span>
    </div>
    <svg class="weather" viewBox="0 0 54 30">
      <ellipse cx="7" cy="15" rx="6" ry="5.500" fill="#fff" stroke="#aaa" stroke-width=".7"/><ellipse cx="18" cy="15" rx="6" ry="5.500" fill="#fff" stroke="#aaa" stroke-width=".7"/><circle cx="4" cy="14" r="2.300" fill="#274f7a"/><circle cx="14.500" cy="14" r="2.300" fill="#274f7a"/>
      <circle cx="39" cy="14" r="10" fill="none" stroke="#e98b1c" stroke-width="2.500" stroke-dasharray="2 2"/><circle cx="39" cy="14" r="8.500" fill="#f8bd35" stroke="#e07a18"/><path d="M37 22c-5-3-1-8 3-6 1-6 9-5 9 0 6-1 5 6 1 6z" fill="#eee" stroke="#bbb"/>
    </svg>
    <span class="temp">-1 °C</span>
    <svg class="tray" viewBox="0 0 78 18">
      <path d="M1 4l5-2 5 2c0 6-2 9-5 11C3 13 1 10 1 4z" fill="#dedbd6"/>
      <path d="M17 3h8v6h-8zM21 6h8v6h-8z" fill="#b8c8da" stroke="#34516f"/><path d="M17 14h9" stroke="#34516f" stroke-width="2"/>
      <path d="M31 7h3l4-4v12l-4-4h-3z" fill="#eee" stroke="#555"/><path d="M41.500 2v14" stroke="#2f67b5" stroke-width="2.500"/>
      <path d="M47 7h3l4-4v12l-4-4h-3z" fill="#e8e8e8" stroke="#777"/><path d="M57 4q4 5 0 10M60 2q5 7 0 13" fill="none" stroke="#9bc95a" stroke-width="1.500"/>
      <circle cx="70" cy="9" r="7" fill="#143a35" stroke="#2b2118"/><path d="M67 6q4-4 6 0c0 4-5 2-4 6-3-1-4-3-2-6z" fill="#3f9450"/>
    </svg>
    <svg class="clip" viewBox="0 0 22 28"><path d="M1.500 5.500h19v20h-19z" fill="none" stroke="#222" stroke-width="1.800"/><path d="M6 4h10v6H6z" fill="#222"/><circle cx="11" cy="4" r="2.800" fill="#e5cfa8" stroke="#222" stroke-width="1.800"/></svg>
    <svg class="graphs" viewBox="0 0 82 28"><path d="M0 0h47v28H0zM50 0h32v28H50z" fill="#fff"/><path d="M5 28v-2h3v2zM36 28v-5h3v5z" fill="#3672c8"/><path d="M52 27h8M62 26.500h5M70 27h11" stroke="#59648a" stroke-dasharray="2 1"/></svg>
    <svg class="bars" viewBox="0 0 14 28"><path d="M2.500 0v27M8.500 0v27" stroke="#d6ccc0" stroke-width="3.500"/><path d="M8.500 23v5" stroke="#259a25" stroke-width="2.500"/><path d="M2.500 26v2" stroke="#3672c8" stroke-width="2.500"/></svg>
    <span class="cpu">31 °C</span><span class="net">net</span>
    <svg class="bars two" viewBox="0 0 10 28"><path d="M2 0v27M7 0v27" stroke="#d6ccc0" stroke-width="3"/><path d="M2 21v7" stroke="#e85820" stroke-width="2.500"/></svg>
    <div class="clock"><b>11:09:07</b><span>mer.22/12/2021</span></div>
    <span class="keys">c<b>N</b>s</span>
    <svg class="last" viewBox="0 0 24 24"><circle cx="12" cy="12" r="11.500" fill="#24313c"/><path d="M17 7.500V5.500H8.500v12.500H17v-3M17 11.500h-5" fill="none" stroke="#fff" stroke-width="2.200"/></svg>
  </div>

  <script>
    // name = button, v = drop-down arrow, |n = separator, hn = handle, _n = space (n in px)
    const bars = {
      'bar-file': 'h11 new open save print |5 cut copy paste |5 undo v redo v |8.5 check v |5 refresh |8 whats _12 combo _13 record stop macro play',
      'bar-view': 'h10.3 fitall fitsel draw v bbox |6.5 back fwd linknav v |7 zoomv* v* iso |5.5 vfront vtop vright |6 vrear vbottom vleft |5 ruler h13.5 part folder link links v h12.5 grid h12.6 tape tang |6 trefresh tclear tall t3d tdelta',
      'bar-design': 'h10.3 body sketch leave mapsk |6 point line plane lcs binderb binderg dog h12 pad rev loft pipe helix prim v |6 pocket hole groove sloft spipe shelix sprim v |6.5 mirror linear polar multi |5.5 fillet chamfer draft thick |5.5 bool'
    };

    const icon = name => `<svg><use href="#${name}"/></svg>`;

    function tool(token) {
      const gap = token.match(/^([|h_])([\d.]+)$/);
      if (gap) {
        const kind = { '|': 'sep', h: 'handle', _: 'space' }[gap[1]];
        return `<span class="${kind}" style="width:${gap[2]}px"></span>`;
      }
      if (token === 'combo') return `<span class="combo">${icon('pd')}Part Design<i class="caret"></i></span>`;
      const on = token.endsWith('*') ? ' on' : '';
      const name = token.replace('*', '');
      if (name === 'v') return `<span class="drop${on}"><i class="caret"></i></span>`;
      return `<span class="tool${on}">${icon(name)}</span>`;
    }

    for (const id in bars) {
      document.getElementById(id).innerHTML = bars[id].split(' ').map(tool).join('');
    }

    // level, arrow, icon, label, extra class, description
    const tree = [
      [3, '', 'sk', 'Sketch003'],
      [2, '', 'binderb', 'Binder', 'hidden-item'],
      [2, 'closed', 'pocket', 'Pocket001', 'hidden-item'],
      [2, 'closed', 'pocket', 'Pocket002', 'hidden-item'],
      [2, 'closed', 'pocketok', 'Pocket003'],
      [1, 'closed', 'body', 'Body001', '', 'réservoir'],
      [1, '', 'dim', 'Dimension'],
      [1, '', 'wirei', 'Wire'],
      [1, 'opened', 'bodyact', 'Body002', 'active-body'],
      [2, 'closed', 'axes', 'Origin002', 'hidden-item'],
      [2, '', 'binderg', 'Binder001'],
      [2, 'closed', 'pipeok', 'AdditivePipe', 'selected'],
      [2, '', 'binderb', 'CopyWire']
    ];
    document.getElementById('rows').innerHTML = tree.map(([level, arrow, ic, label, cls = '', desc = '']) => `
      <div class="row level-${level} ${cls}">
        <i class="arrow ${arrow}"></i>
        <span class="name">${icon(ic)}${label}</span><span class="desc">${desc}</span>
      </div>`).join('');

    const props = [
      ['Midplane', 'false'], ['Reversed', 'false'], ['Up To Face', ''], ['Allow Mult...', 'true'],
      ['Sweep'],
      ['Sections', ''], ['Spine', 'CopyWire'], ['Spine Tan...', 'false'], ['Auxillery S...', ''],
      ['Auxillery S...', 'false'], ['Auxillery C...', 'true'], ['Mode', 'Standard'],
      ['Binormal', '[0,00 0,00 0,00]', 'closed'], ['Transition', 'Transformed'], ['Transform...', 'Constant']
    ];
    document.getElementById('props').innerHTML = props.map(([key, value, arrow = '']) =>
      value === undefined
        ? `<div class="prop group"><i></i><b>${key}</b></div>`
        : `<div class="prop"><i class="arrow ${arrow}"></i><span>${key}</span><em>${value}</em></div>`
    ).join('');
  </script>

</body>
</html>
```
FILE: styles.css
```
* {
  margin: 0;
  padding: 0;
  box-sizing: border-box;
}
body {
  width: 1280px;
  height: 720px;
  overflow: hidden;
  display: flex;
  flex-direction: column;
  font-family: "DejaVu Sans", sans-serif;
  font-size: 10.6px;
  line-height: 14px;
  color: #2b2b2e;
  background-color: #efeff0;
  white-space: nowrap;
}
svg {
  display: block;
  flex: none;
}
.defs {
  position: absolute;
  width: 0;
  height: 0;
}
.caret, .arrow {
  flex: none;
}

/* window frame */
.titlebar {
  height: 13px;
  flex: none;
  display: flex;
  align-items: center;
  justify-content: space-between;
  color: #fff;
  background: linear-gradient(#7c93ac 0, #7c93ac 1px, #5b9ae6 2px, #3f82d8 12px, #3a74c0 13px);
}
.titlebar::before {
  content: "";
  position: absolute;
  left: 303px;
  top: 0;
  width: 674px;
  height: 2px;
  background: #efe3c4;
}
.app-icon {
  width: 12px;
  height: 11px;
  margin-left: 1px;
}
.title {
  font-weight: bold;
  font-size: 10.7px;
  line-height: 11px;
  margin: 0 0 2px 1px;
  text-shadow: 0 0 1px #234;
}
.winbtns {
  width: 62px;
  height: 12px;
}
.menubar {
  height: 15px;
  flex: none;
  display: flex;
  padding-left: 8px;
  gap: 10.8px;
  background: #ededee;
}
.menubar u {
  text-underline-offset: 1.5px;
}

/* toolbars */
.toolbar {
  height: 32px;
  flex: none;
  display: flex;
  align-items: center;
  background: linear-gradient(#f8f8f8, #ececed);
  border-bottom: 1px solid #c4c4c4;
}
#bar-view {
  height: 31px;
}
.tool {
  width: 27.4px;
  display: flex;
  justify-content: center;
}
.tool svg {
  width: 21px;
  height: 21px;
}
.drop {
  width: 10px;
  display: flex;
  justify-content: center;
}
.tool.on, .drop.on {
  height: 27px;
  align-items: center;
  background: #d4d4d4;
  border: 1px solid #bcbcbc;
}
.caret {
  border: 3px solid transparent;
  border-top: 4px solid #4a4a4a;
  border-bottom: 0;
}
.sep {
  height: 24px;
  background: linear-gradient(#d8d8d8, #d8d8d8) center / 1px 100% no-repeat;
}
.handle {
  height: 18px;
  background: repeating-linear-gradient(#d4d4d4 0 1px, transparent 1px 3px) center / 3px 100% no-repeat;
}
.combo {
  width: 145px;
  height: 18px;
  display: flex;
  align-items: center;
  padding: 0 6px 0 3px;
  background: linear-gradient(#fdfdfd, #f0f0f0);
  border: 1px solid #b9b9b9;
  border-radius: 2px;
}
.combo svg {
  width: 12px;
  height: 12px;
  margin-right: 1px;
}
.combo .caret {
  margin-left: auto;
}

/* combined view */
main {
  height: 545px;
  flex: none;
  display: flex;
}
aside {
  width: 404px;
  flex: none;
}
.dock-title {
  height: 15px;
  display: flex;
  align-items: center;
  justify-content: space-between;
  padding: 0 6px 3px 2px;
}
.dock-title svg {
  width: 17px;
  height: 9px;
}
.tabs {
  display: flex;
  height: 21px;
  padding-left: 1px;
  border-right: 1px solid #c4c4c4;
  width: 399px;
}
.tab {
  display: flex;
  align-items: center;
  justify-content: center;
  height: 20px;
  background: #e6e6e6;
  border: 1px solid #c8c8c8;
}
.tab.on {
  background: #fdfdfd;
}
.model {
  width: 59px;
  padding-right: 1px;
}
.tasks {
  width: 60px;
}
.view {
  width: 42px;
  padding-right: 2px;
}
.data {
  width: 67px;
}
.tabs.bottom {
  height: 24px;
  padding-left: 2px;
  background: #fafafa;
  border-bottom: 1px solid #c4c4c4;
}
.tabs.bottom .tab {
  height: 21px;
  border-top: 0;
}
.tree {
  display: flex;
  justify-content: space-between;
  width: 399px;
  height: 228px;
  padding-right: 1px;
  background: #fff;
  border: 1px solid #bdbdbd;
  border-width: 1px 1px 1px 2px;
}
.tree-list {
  width: 296px;
}
.tree-head {
  display: grid;
  grid-template-columns: 207px 1fr;
  width: 382px;
  height: 16px;
  background: #efefef;
}
.tree-head span {
  padding: 1px 2px 0 1px;
  border-right: 1px solid #dcdcdc;
  border-bottom: 1px solid #c8c8c8;
  background: linear-gradient(#fafafa, #ececec);
}
.tree-head span:last-child {
  width: 89px;
}
.row {
  display: flex;
  align-items: center;
  height: 15.33px;
}
.level-1 { padding-left: 21px; }
.level-2 { padding-left: 38px; }
.level-3 { padding-left: 55px; }
.arrow {
  width: 14px;
  height: 8px;
}
.arrow.closed::before, .arrow.opened::before {
  content: "";
  display: block;
  width: 0;
  height: 0;
  margin: 1px 0 0 3px;
  border: 4px solid transparent;
  border-width: 3.5px 0 3.5px 4px;
  border-left-color: #444;
}
.arrow.opened::before {
  margin: 2px 0 0 2px;
  border-width: 4px 3.5px 0;
  border-color: #444 transparent transparent;
}
.name {
  display: flex;
  align-items: center;
  height: 14.3px;
  padding-left: 2px;
}
.name svg {
  width: 14px;
  height: 14px;
  margin-right: 4px;
}
.level-1 .name {
  width: 172px;
}
.desc {
  padding-left: 2px;
}
.hidden-item .name {
  color: #bdbdbd;
}
.hidden-item svg {
  filter: grayscale(1);
  opacity: .6;
}
.active-body .name {
  font-weight: bold;
  color: #000;
  background: #e6e6fa;
}
.selected {
  background: #308cc6;
}
.selected .name {
  color: #fff;
}

/* scroll bars */
.scroll {
  width: 12px;
  display: flex;
  flex-direction: column;
  border-left: 1px solid #ccc;
  background: #f8f8f8;
}
.scroll i {
  height: 12px;
  flex: none;
  display: flex;
  align-items: center;
  justify-content: center;
  background: #fdfdfd;
}
.scroll i::before {
  content: "";
  border: 3px solid transparent;
  border-width: 0 3px 4px;
  border-bottom-color: #444;
}
.scroll .down {
  margin-top: auto;
}
.scroll .down::before {
  border-width: 4px 3px 0;
  border-color: #444 transparent transparent;
}
.scroll b {
  background: #e2e2e2;
  border: 1px solid #cacaca;
  border-left: 0;
}
.tree-thumb {
  height: 65px;
}
.prop-thumb {
  height: 69px;
}

/* property editor */
.props {
  display: flex;
  width: 395px;
  height: 250px;
  margin: 5px 0 0 2px;
  background: #fff;
  border: 1px solid #bdbdbd;
}
.prop-list {
  width: 381px;
}
.prop-head {
  display: grid;
  grid-template-columns: 89px 1fr;
  height: 15px;
  background: linear-gradient(#fafafa, #ececec);
  border-bottom: 1px solid #c8c8c8;
}
.prop-head span {
  padding-left: 1px;
  border-right: 1px solid #dcdcdc;
}
.prop-view {
  height: 233px;
  display: flex;
  flex-direction: column;
  justify-content: flex-end;
  overflow: hidden;
}
.prop {
  display: grid;
  grid-template-columns: 18px 71px 1fr;
  height: 16px;
  align-items: center;
}
.prop:nth-child(even) {
  background: #f6f6f6;
}
.prop span, .prop em {
  height: 16px;
  line-height: 16px;
  padding-left: 1.5px;
  font-style: normal;
  border-bottom: 1px solid #d0d0d0;
  border-right: 1px solid #d0d0d0;
}
.prop .arrow {
  width: 18px;
  padding-left: 4px;
}
.prop.group {
  color: #fff;
  background: #a0a0a0;
}
.prop.group b {
  padding-left: 2px;
}

/* 3D view and document tabs */
.mdi {
  width: 876px;
}
.scene {
  width: 876px;
  height: 515px;
}
.cube {
  font: bold 6.5px "DejaVu Sans", sans-serif;
  fill: #222;
}
.cube.top {
  font-size: 6px;
}
.axis {
  font-size: 6.5px;
  fill: #222;
}
.doc-tabs {
  display: flex;
  height: 26px;
}
.doc-tab {
  width: 231px;
  display: flex;
  align-items: center;
  padding: 2px 0 0 9px;
  background: #fafafa;
  border: 1px solid #c9c9c9;
  border-top: 0;
}
.doc-tab svg {
  width: 14px;
  height: 14px;
  margin-right: 3px;
}
.doc-tab b {
  margin-left: 6px;
  color: #777;
  font-size: 10px;
}

/* status bar */
.status {
  height: 21px;
  flex: none;
  display: flex;
  align-items: center;
  padding: 0 1px 2px;
  background: linear-gradient(#efeff0 0, #ececec 12px, #cfcfcf 17px, #a5a5a5 21px);
}
.nav-style {
  display: flex;
  align-items: center;
  margin-left: auto;
}
.nav-style svg {
  width: 14px;
  height: 14px;
}
.nav-style .caret {
  margin: 0 8px 0 7px;
}

/* desktop panel */
.taskbar {
  height: 31px;
  flex: none;
  display: flex;
  align-items: center;
  font-family: Roboto, sans-serif;
  font-size: 12px;
  color: #3c3b3a;
  background: #e6cfa9;
}
.launchers {
  display: flex;
  align-items: center;
  gap: 3px;
  padding-left: 1px;
}
.launchers svg {
  width: 28px;
  height: 28px;
}
.launchers svg:last-child {
  width: 26px;
  height: 24px;
}
.desk {
  width: 27px;
  height: 26px;
  background: linear-gradient(#08a3d8 65%, #46606c 65%);
}
.tasks-list {
  display: flex;
  margin-left: 7px;
}
.task {
  display: flex;
  align-items: center;
  width: 74.8px;
  height: 31px;
  padding-left: 2px;
}
.task svg {
  width: 12px;
  height: 12px;
  margin-right: 6px;
}
.task.active {
  background: #d6d0cc;
}
.task.dim {
  color: #77695a;
}
.weather {
  width: 54px;
  height: 30px;
  margin-left: 5px;
}
.temp {
  width: 36px;
  margin-left: 2px;
}
.tray {
  width: 78px;
  height: 18px;
}
.clip {
  width: 22px;
  height: 28px;
  margin-left: 15px;
}
.graphs {
  width: 82px;
  height: 28px;
  margin-left: 6px;
}
.bars {
  width: 14px;
  height: 28px;
  margin-left: 7px;
}
.bars.two {
  width: 10px;
  margin-left: 4px;
}
.cpu {
  width: 43px;
  flex: none;
  font-size: 16px;
  color: #2f9a1e;
}
.clock {
  width: 88px;
  flex: none;
  text-align: center;
  color: #7c1763;
}
.clock b {
  display: block;
  font: bold 13.8px/15px "DejaVu Sans", sans-serif;
}
.clock span {
  display: block;
  height: 15px;
  font-size: 12.2px;
  line-height: 16px;
}
.keys {
  margin-left: 1px;
  font-size: 11px;
}
.keys b {
  background: #1de81d;
  color: #123;
}
.last {
  width: 23px;
  height: 23px;
  margin: 0 3px 0 auto;
}
```
